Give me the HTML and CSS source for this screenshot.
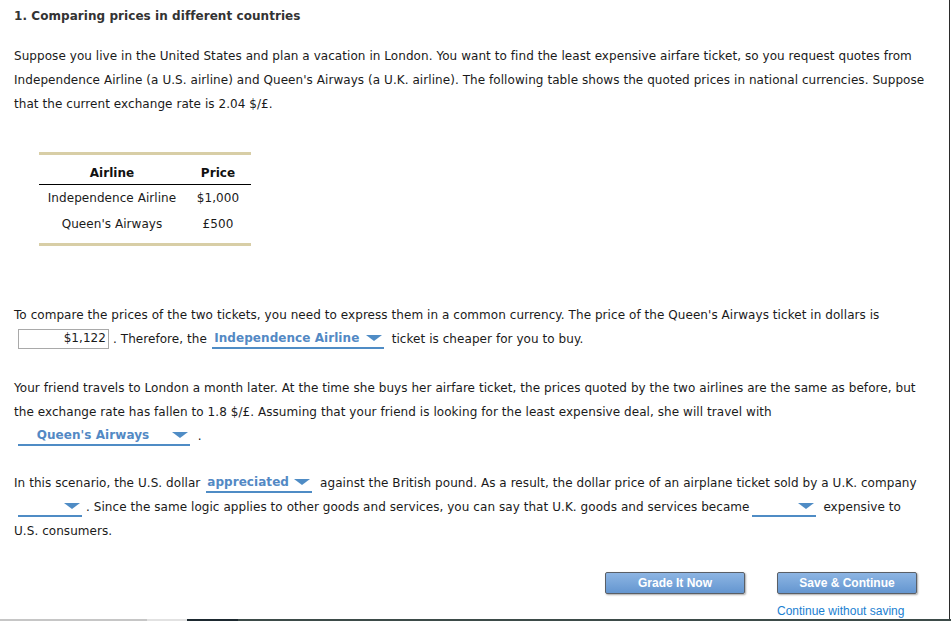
FILE: index.html
```html
<!DOCTYPE html>
<html>
<head>
<meta charset="utf-8">
<link rel="stylesheet" href="styles.css">
</head>
<body>
<div class="screen">
  <div class="frame">
    <div class="content">
      <h1 class="title">1. Comparing prices in different countries</h1>
      <p class="para">Suppose you live in the United States and plan a vacation in London. You want to find the least expensive airfare ticket, so you request quotes from<br>Independence Airline (a U.S. airline) and Queen's Airways (a U.K. airline). The following table shows the quoted prices in national currencies. Suppose<br>that the current exchange rate is 2.04 $/£.</p>

      <div class="table-wrap">
        <table class="prices">
          <thead>
            <tr><th class="c1">Airline</th><th class="c2">Price</th></tr>
          </thead>
          <tbody>
            <tr class="r1"><td class="c1">Independence Airline</td><td class="c2">$1,000</td></tr>
            <tr class="r2"><td class="c1">Queen's Airways</td><td class="c2">£500</td></tr>
          </tbody>
        </table>
      </div>

      <p class="para para-gap">To compare the prices of the two tickets, you need to express them in a common currency. The price of the Queen's Airways ticket in dollars is<br><span class="answer">$1,122</span>. Therefore, the <span class="dd dd-wide"><span class="dd-text">Independence Airline</span><span class="arrow"></span></span> ticket is cheaper for you to buy.</p>

      <p class="para para-3">Your friend travels to London a month later. At the time she buys her airfare ticket, the prices quoted by the two airlines are the same as before, but<br>the exchange rate has fallen to 1.8 $/£. Assuming that your friend is looking for the least expensive deal, she will travel with<br><span class="dd dd-wide dd-first"><span class="dd-text">Queen's Airways</span><span class="arrow"></span></span> .</p>

      <p class="para para-4">In this scenario, the U.S. dollar <span class="dd dd-mid dd-after"><span class="dd-text dd-left">appreciated</span><span class="arrow"></span></span> against the British pound. As a result, the dollar price of an airplane ticket sold by a U.K. company<br><span class="dd dd-blank dd-first"><span class="dd-text"></span><span class="arrow"></span></span>. Since the same logic applies to other goods and services, you can say that U.K. goods and services became<span class="dd dd-blank dd-became"><span class="dd-text"></span><span class="arrow"></span></span> expensive to<br>U.S. consumers.</p>

      <div class="actions">
        <div class="btn-col">
          <button class="btn">Grade It Now</button>
        </div>
        <div class="btn-col">
          <button class="btn">Save &amp; Continue</button>
          <a class="link" href="#">Continue without saving</a>
        </div>
      </div>
    </div>
  </div>
  <div class="taskbar">
    <span class="tb tb1"></span><span class="tb tb2"></span><span class="tb tb3"></span><span class="tb tb4"></span>
  </div>
</div>
</body>
</html>
```

FILE: styles.css
```css
html, body {
  margin: 0;
  padding: 0;
  background: #fff;
}
.screen {
  width: 951px;
  height: 621px;
  display: flex;
  flex-direction: column;
  overflow: hidden;
}
.frame {
  flex: 1;
  width: 949px;
  border-right: 1px solid #2b2b2b;
  overflow: hidden;
}
.content {
  padding: 4px 0 0 14px;
  font-family: "DejaVu Sans", Verdana, sans-serif;
  font-size: 12px;
  letter-spacing: 0.06px;
  line-height: 24px;
  color: #1a1a1a;
}
.title {
  margin: 0;
  font-size: 12px;
  font-weight: bold;
  line-height: 24px;
  color: #333;
}
.para {
  margin: 16px 0 0 0;
  white-space: nowrap;
}
.para-gap {
  margin-top: 57px;
}
.para-3 {
  margin-top: 25px;
}
.para-4 {
  margin-top: 23px;
}
.table-wrap {
  margin: 36px 0 0 25px;
  width: 212px;
  border-top: 3px solid #d8cea6;
  border-bottom: 3px solid #d8cea6;
  padding-bottom: 6px;
}
.prices {
  width: 212px;
  border-collapse: collapse;
  font-size: 12px;
  line-height: 20px;
}
.prices th {
  font-weight: bold;
  padding: 8px 0 1px 0;
  border-bottom: 1px solid #000;
  text-align: center;
  color: #111;
}
.prices td {
  padding: 3px 0 3px 0;
  text-align: center;
}
.prices .c1 { width: 146px; }
.prices .c2 { width: 66px; }

.answer {
  display: inline-block;
  box-sizing: border-box;
  width: 91px;
  height: 20px;
  line-height: 17px;
  margin: 0 4px 0 4px;
  padding-right: 2px;
  border: 1px solid #a9a9a9;
  text-align: right;
  vertical-align: middle;
  position: relative;
  top: -1px;
}
.dd {
  display: inline-flex;
  align-items: center;
  box-sizing: border-box;
  height: 20px;
  border-bottom: 2px solid #4f8cc5;
  vertical-align: middle;
  margin: 0 4px 0 1px;
  position: relative;
  top: -1px;
}
.dd-first { margin-left: 4px; }
.dd-after { margin-left: 2px; }
.dd-became { margin-left: 2px; }
.dd-text {
  flex: 1;
  text-align: center;
  font-weight: bold;
  color: #5389c4;
  line-height: 18px;
}
.dd-left { text-align: left; padding-left: 1px; }
.arrow {
  width: 0;
  height: 0;
  border-left: 8px solid transparent;
  border-right: 8px solid transparent;
  border-top: 6px solid #4f8cc5;
  margin: 0 2px 0 4px;
}
.dd-wide { width: 172px; }
.dd-mid { width: 106px; }
.dd-blank { width: 64px; }

.actions {
  display: flex;
  gap: 32px;
  margin: 29px 0 0 591px;
}
.btn-col {
  display: flex;
  flex-direction: column;
  align-items: flex-start;
}
.btn {
  width: 140px;
  height: 22px;
  padding: 0;
  border: 1px solid #5a5f66;
  border-radius: 2px;
  background: linear-gradient(#8db5e3, #6496d0);
  color: #fff;
  font-family: "Liberation Sans", Arial, sans-serif;
  font-weight: bold;
  font-size: 12px;
  letter-spacing: 0;
  box-shadow: 1px 1px 2px rgba(0,0,0,0.35);
}
.link {
  margin-top: 9px;
  font-family: "Liberation Sans", Arial, sans-serif;
  font-size: 12px;
  letter-spacing: 0;
  line-height: 16px;
  color: #1a80d1;
  text-decoration: none;
}
.taskbar {
  display: flex;
  height: 2px;
  flex: none;
}
.tb { display: block; height: 2px; }
.tb1 { width: 147px; background: #c6c6c6; }
.tb2 { width: 40px; background: #e2e2e2; }
.tb3 { width: 51px; background: #1d2930; }
.tb4 { flex: 1; background: #3d4b49; }
```
